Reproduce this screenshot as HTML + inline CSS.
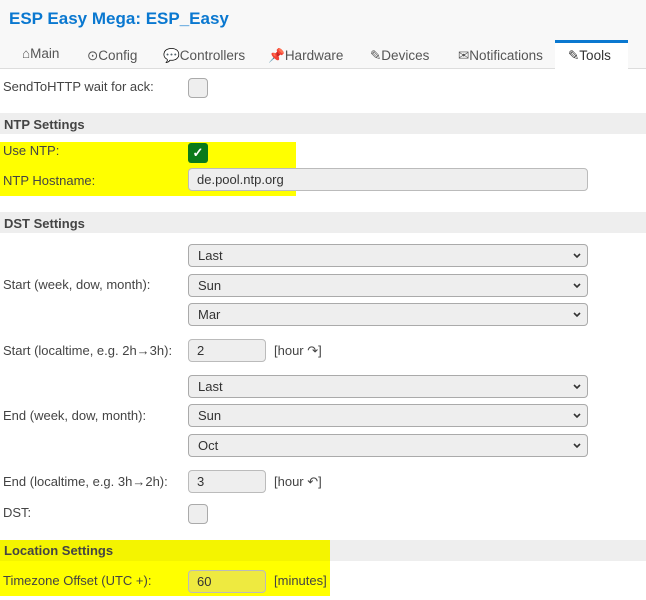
<!DOCTYPE html>
<html><head><meta charset="utf-8"><style>
*{box-sizing:border-box;margin:0;padding:0}
body{width:646px;height:600px;overflow:hidden;background:#fff;font-family:"Liberation Sans",Arial,sans-serif;font-size:13px;color:#444;position:relative}
.a{position:absolute;white-space:nowrap}
.hdr{left:0;top:0;width:646px;height:69px;background:#f8f8f8;border-bottom:1px solid #ddd}
.title{left:9px;top:9px;font-size:17px;font-weight:bold;color:#0a78d0}
.tab{top:48px;color:#555;font-size:13.5px}
.act{left:555px;top:40px;width:73px;height:30px;background:#fff;border-top:3px solid #0a78d0}
.band{left:0;width:646px;height:21px;background:#eee;font-weight:bold;padding:4px 0 0 4px;color:#444}
.yl{background:#ff0}
.lbl{left:3px}
.cb{left:188px;width:20px;height:20px;border:1px solid #aaa;border-radius:4px;background:#eee}
.in{left:188px;height:23px;border:1px solid #bbb;border-radius:4px;background:#eee;padding:3px 0 0 8px;color:#333}
.sel{left:188px;width:400px;height:23px;border:1px solid #aaa;border-radius:4px;background:#eee;padding:3px 0 0 9px;color:#333}
.sel svg{position:absolute;right:6px;top:8px}
</style></head><body>
<div class="a hdr"></div>
<div class="a title">ESP Easy Mega: ESP_Easy</div>
<div class="a act"></div>
<div class="a tab" style="left:22px;top:46px">⌂Main</div>
<div class="a tab" style="left:87px">⊙Config</div>
<div class="a tab" style="left:163px">💬Controllers</div>
<div class="a tab" style="left:268px"><span style="color:#d22">📌</span>Hardware</div>
<div class="a tab" style="left:370px">✎Devices</div>
<div class="a tab" style="left:458px">✉Notifications</div>
<div class="a tab" style="left:568px;color:#333">✎Tools</div>

<div class="a lbl" style="top:79px">SendToHTTP wait for ack:</div>
<div class="a cb" style="top:78px"></div>

<div class="a band" style="top:113px">NTP Settings</div>
<div class="a yl" style="left:0;top:142px;width:296px;height:54px"></div>
<div class="a lbl" style="top:143px">Use NTP:</div>
<div class="a" style="left:188px;top:143px;width:20px;height:20px;background:#0a7a1a;border-radius:3px;color:#fff;font-size:13px;text-align:center;line-height:20px;font-weight:bold">✓</div>
<div class="a lbl" style="top:173px">NTP Hostname:</div>
<div class="a in" style="top:168px;width:400px">de.pool.ntp.org</div>

<div class="a band" style="top:212px">DST Settings</div>
<div class="a sel" style="top:244px">Last<svg width="8" height="6"><path d="M1 1l3 3 3-3" stroke="#333" stroke-width="1.6" fill="none"/></svg></div>
<div class="a lbl" style="top:277px">Start (week, dow, month):</div>
<div class="a sel" style="top:274px">Sun<svg width="8" height="6"><path d="M1 1l3 3 3-3" stroke="#333" stroke-width="1.6" fill="none"/></svg></div>
<div class="a sel" style="top:303px">Mar<svg width="8" height="6"><path d="M1 1l3 3 3-3" stroke="#333" stroke-width="1.6" fill="none"/></svg></div>
<div class="a lbl" style="top:343px">Start (localtime, e.g. 2h→3h):</div>
<div class="a in" style="top:339px;width:78px">2</div>
<div class="a" style="left:274px;top:343px">[hour ↷]</div>
<div class="a sel" style="top:375px">Last<svg width="8" height="6"><path d="M1 1l3 3 3-3" stroke="#333" stroke-width="1.6" fill="none"/></svg></div>
<div class="a lbl" style="top:408px">End (week, dow, month):</div>
<div class="a sel" style="top:404px">Sun<svg width="8" height="6"><path d="M1 1l3 3 3-3" stroke="#333" stroke-width="1.6" fill="none"/></svg></div>
<div class="a sel" style="top:434px">Oct<svg width="8" height="6"><path d="M1 1l3 3 3-3" stroke="#333" stroke-width="1.6" fill="none"/></svg></div>
<div class="a lbl" style="top:474px">End (localtime, e.g. 3h→2h):</div>
<div class="a in" style="top:470px;width:78px">3</div>
<div class="a" style="left:274px;top:474px">[hour ↶]</div>
<div class="a lbl" style="top:505px">DST:</div>
<div class="a cb" style="top:504px"></div>

<div class="a band" style="top:540px"></div>
<div class="a yl" style="left:0;top:540px;width:330px;height:56px;background:#f4f400"></div>
<div class="a" style="left:4px;top:543px;font-weight:bold">Location Settings</div>
<div class="a yl" style="left:0;top:561px;width:330px;height:35px"></div>
<div class="a lbl" style="top:573px">Timezone Offset (UTC +):</div>
<div class="a in" style="top:570px;width:78px;background:#eeea40">60</div>
<div class="a" style="left:274px;top:573px">[minutes]</div>
</body></html>
